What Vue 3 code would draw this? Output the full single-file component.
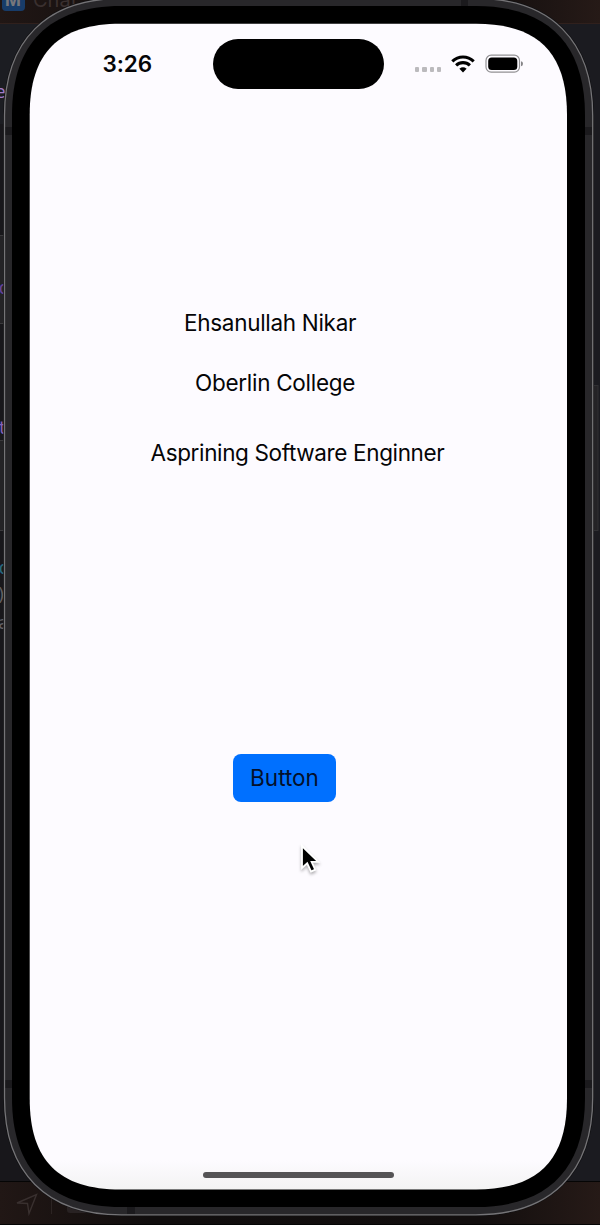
<script setup>
const lines = [
  { text: 'Ehsanullah Nikar', cls: 'name' },
  { text: 'Oberlin College', cls: 'school' },
  { text: 'Asprining Software Enginner', cls: 'role' },
]

// Outline of a rounded rectangle with continuous (superelliptical) corners.
function squircle(l, t, r, b, e, c) {
  return `M${l} ${t + e}C${l} ${t + c} ${l + c} ${t} ${l + e} ${t}` +
    `H${r - e}C${r - c} ${t} ${r} ${t + c} ${r} ${t + e}` +
    `V${b - e}C${r} ${b - c} ${r - c} ${b} ${r - e} ${b}` +
    `H${l + e}C${l + c} ${b} ${l} ${b - c} ${l} ${b - e}Z`
}
const shell = squircle(4.5, -1.5, 592.7, 1214.8, 117, 42)
const bezel = squircle(12, 6, 585, 1207, 109, 37.5)
const glass = squircle(29.7, 23.8, 567, 1189.5, 91, 29)
</script>

<template>
  <main class="stage">
    <svg class="backdrop" width="600" height="1225" viewBox="0 0 600 1225">
      <defs>
        <linearGradient id="warm" x1="0" x2="1" y1="0" y2="0">
          <stop offset="0" stop-color="#211715" />
          <stop offset=".25" stop-color="#100d0d" />
          <stop offset=".8" stop-color="#120e0e" />
          <stop offset="1" stop-color="#261a17" />
        </linearGradient>
        <linearGradient id="screen" x1="0" x2="0" y1="0" y2="1">
          <stop offset="0" stop-color="#fdfbff" />
          <stop offset=".975" stop-color="#fdfbff" />
          <stop offset="1" stop-color="#f3f3f3" />
        </linearGradient>
      </defs>
      <rect width="600" height="1225" fill="#18171b" />
      <rect width="600" height="24" fill="url(#warm)" />
      <path d="M0 23.5H600" stroke="#30201c" />
      <rect y="24" width="60" height="100" fill="#1c1d22" />
      <rect x="540" y="24" width="60" height="1157" fill="#1b1b20" />
      <g fill="#242326" stroke="#3a393c">
        <rect x="-5" y="235.5" width="14" height="88" />
        <rect x="-5" y="440.5" width="14" height="90" />
        <rect x="590" y="385.5" width="8" height="145" stroke="#303033" />
      </g>
      <rect y="1181" width="600" height="44" fill="url(#warm)" />
      <path d="M0 1181.5H600M0 1224.5H600" stroke="#050505" />
      <rect x="2" y="-10" width="23" height="21" rx="4" fill="#183c69" />
      <text x="5" y="6" class="app" fill="#77777b">M</text>
      <text x="33" y="7" class="tab" fill="#3a302f">Chat</text>
      <g class="code">
        <text x="-5" y="98" fill="#a17bc9">e</text>
        <text x="-1.5" y="294" fill="#65429a">o</text>
        <text x="-3" y="434" fill="#8561b6">t</text>
        <text x="-1.5" y="574" fill="#28677f">o</text>
        <text x="-4" y="601" fill="#626064">)</text>
        <text x="-2" y="629" fill="#626064">a</text>
      </g>
      <path d="M17 1203L36.5 1194.5L29 1213.5L27.5 1203.5Z" fill="none" stroke="#39302f" stroke-width="1.4" />
      <path d="M51.5 1195V1214" stroke="#2c2423" />
      <rect x="67" y="1199" width="24" height="14" rx="3" fill="#282223" />
      <path :d="shell" fill="#28272a" stroke="#111113" stroke-width="2.6" />
      <path :d="shell" fill="#28272a" stroke="#757477" stroke-width="1.3" />
      <g fill="#1b1a1d">
        <path d="M461 0h7v7h-7zM5.5 127H12V135H5.5zM585 127H592V135H585zM5.5 1080H12V1088H5.5zM585 1080H592V1088H585zM127 1206h8v8h-8z" />
      </g>
      <path :d="bezel" fill="#000" />
      <path :d="glass" fill="url(#screen)" />
    </svg>

    <section class="phone">
      <header class="status">
        <span class="time">3:26</span>
        <span class="island"></span>
        <div class="indicators">
          <div class="dots"><i v-for="n in 4" :key="n"></i></div>
          <svg class="wifi" width="24" height="18" viewBox="0 0 24 18">
            <g fill="none" stroke="#000" stroke-width="3.1">
              <path d="M1.3 6.3C7.4 .5 16.6 .5 22.7 6.3" />
              <path d="M5.1 10.4C9 6.7 15 6.7 18.9 10.4" />
            </g>
            <path d="M8.4 13.8Q12 10.9 15.6 13.8L12 17.5Z" />
          </svg>
          <svg class="battery" width="39" height="20" viewBox="0 0 39 20">
            <rect x="1" y="1.2" width="33.5" height="17" rx="5.2" fill="none" stroke="#929194" stroke-width="1.2" />
            <rect x="3.2" y="3.4" width="29.1" height="12.7" rx="3.5" />
            <path d="M36 7.2Q38 7.6 38 9.7T36 12.2Z" fill="#858487" />
          </svg>
        </div>
      </header>
      <div class="labels">
        <p v-for="line in lines" :key="line.text" :class="line.cls">{{ line.text }}</p>
      </div>
      <button class="action">Button</button>
      <div class="home"></div>
    </section>

    <svg class="cursor" width="24" height="34" viewBox="0 0 24 34">
      <path d="M3 3V25L8.2 20.3L12 28.5L16.2 26.7L12.6 18.8H19.3Z" fill="#000" stroke="#fff" stroke-width="1.8" />
    </svg>
  </main>
</template>

<style scoped>
.stage {
  position: relative;
  width: 600px;
  height: 1225px;
  overflow: hidden;
  font-family: Inter, "Liberation Sans", sans-serif;
  color: #050507;
}
.backdrop { position: absolute; inset: 0; display: block; }
.app { font: 700 17px Inter, sans-serif; }
.tab { font: 20px Inter, sans-serif; }
.code { font: 18px "DejaVu Sans Mono", monospace; }
.phone {
  position: relative;
  box-sizing: border-box;
  height: 1190px;
  margin: 0 33px 0 30px;
  padding-top: 39px;
  display: flex;
  flex-direction: column;
}
.status { display: flex; height: 50px; align-items: center; }
.time {
  width: 110.5px;
  margin-left: 72.5px;
  font-size: 22.5px;
  line-height: 28px;
  padding-bottom: 1px;
  font-weight: 600;
  letter-spacing: -0.1px;
}
.island { width: 171px; height: 50.5px; border-radius: 26px; background: #000; }
.indicators { display: flex; margin-left: 31px; align-items: center; }
.dots { display: flex; gap: 3px; padding-top: 11px; }
.dots i { width: 4.3px; height: 4.3px; border-radius: 1px; background: #bbbabd; }
.wifi { margin-left: 10px; }
.battery { margin-left: 9.5px; }
.labels { padding-top: 220px; }
.labels p { margin: 0; height: 28px; line-height: 28px; font-size: 22.5px; white-space: nowrap; }
.labels .name { margin-left: 154px; letter-spacing: -0.3px; }
.labels .school { margin: 32px 0 0 165px; letter-spacing: -0.28px; }
.labels .role { margin: 42px 0 0 120.5px; letter-spacing: -0.36px; }
.action {
  width: 103px;
  height: 48px;
  margin: 287px 0 0 203px;
  padding: 0;
  border: 0;
  border-radius: 8px;
  background: #0070ff;
  color: #04102b;
  font: 22.5px/48px Inter, sans-serif;
}
.home { width: 191px; height: 6px; margin: auto 0 12px 173px; border-radius: 3px; background: #555456; }
.cursor {
  position: absolute;
  left: 299px;
  top: 843px;
  filter: drop-shadow(0 2px 1.5px rgba(0, 0, 0, .3));
}
</style>

<style>
body { background: #18171b; }
</style>
